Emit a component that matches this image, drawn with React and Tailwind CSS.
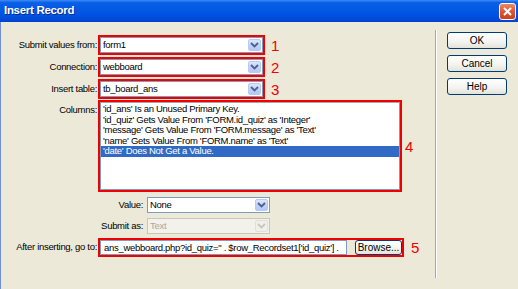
import React from "react";

function Chevron({ color = "#4D6185" }) {
  return (
    <svg width="9" height="6" viewBox="0 0 9 6">
      <path d="M1 1 L4.5 4.5 L8 1" fill="none" stroke={color} strokeWidth="1.8" />
    </svg>
  );
}

const T = "text-[9.5px] tracking-[-0.3px]";

function Select({ value, w, disabled }) {
  return (
    <div
      className={`flex h-[16px] ${w} items-stretch border ${
        disabled ? "bg-[#F2F1EB] border-[#C9C7BA]" : "bg-white border-[#7F9DB9]"
      }`}
    >
      <div
        className={`flex-1 overflow-hidden whitespace-nowrap pl-[2px] ${T} leading-[14px] ${
          disabled ? "text-[#ACA899]" : "text-black"
        }`}
      >
        {value}
      </div>
      <div
        className={`m-[1px] flex w-[13px] items-center justify-center rounded-[2px] border ${
          disabled
            ? "border-[#E2E0D6] bg-[#F0EFEA]"
            : "border-[#B7CAF5] bg-[linear-gradient(to_bottom,#DDE7FE,#C1D3FB_50%,#B4C8F6)]"
        }`}
      >
        <Chevron color={disabled ? "#C9C7BA" : "#4D6185"} />
      </div>
    </div>
  );
}

function Num({ n, cls }) {
  return (
    <span className={`text-[15px] leading-none text-[#F00000] ${cls}`}>{n}</span>
  );
}

function XPButton({ children, cls }) {
  return (
    <div
      className={`flex items-center justify-center rounded-[3px] border border-[#003C74] bg-[linear-gradient(to_bottom,#FFFFFF,#F3F3EF_60%,#E3E2DA)] text-[10px] text-black ${cls}`}
    >
      {children}
    </div>
  );
}

export default function App() {
  return (
    <div className="flex h-[289px] w-[518px] flex-col overflow-hidden bg-[#ECE9D8] font-['Liberation_Sans',Arial,sans-serif] text-black">
      {/* Title bar */}
      <div className="flex h-[22px] shrink-0 items-center justify-between bg-[linear-gradient(to_bottom,#3D8CF5_0%,#0A5FE6_12%,#0055E5_60%,#0049D6_90%,#0040C8_100%)] pl-[4px] pr-[2px]">
        <span className="text-[11.5px] font-bold tracking-[-0.3px] text-white [text-shadow:1px_1px_0_#0A2A8C]">
          Insert Record
        </span>
        <div className="flex h-[17px] w-[17px] items-center justify-center rounded-[3px] border border-white bg-[linear-gradient(to_bottom,#EE8866,#E0552F_50%,#C8401C)]">
          <svg width="9" height="9" viewBox="0 0 9 9">
            <path d="M1 1 L8 8 M8 1 L1 8" stroke="white" strokeWidth="2" />
          </svg>
        </div>
      </div>

      {/* Body */}
      <div className="flex flex-1 border-l border-[#6F8FD8]">
        {/* Form */}
        <div className="flex w-[434px] flex-col">
          {/* Row 1 */}
          <div className="mt-[13px] flex items-center">
            <div className={`w-[96px] text-right ${T}`}>Submit values from:</div>
            <div className="ml-[1px] border-2 border-[#F00000]">
              <Select value="form1" w="w-[163px]" />
            </div>
            <Num n="1" cls="ml-[6px]" />
          </div>
          {/* Row 2 */}
          <div className="mt-[2px] flex items-center">
            <div className={`w-[96px] text-right ${T}`}>Connection:</div>
            <div className="ml-[1px] border-2 border-[#F00000]">
              <Select value="webboard" w="w-[163px]" />
            </div>
            <Num n="2" cls="ml-[6px]" />
          </div>
          {/* Row 3 */}
          <div className="mt-[2px] flex items-center">
            <div className={`w-[96px] text-right ${T}`}>Insert table:</div>
            <div className="ml-[1px] border-2 border-[#F00000]">
              <Select value="tb_board_ans" w="w-[163px]" />
            </div>
            <Num n="3" cls="ml-[6px]" />
          </div>
          {/* Columns */}
          <div className="mt-[1px] flex items-center">
            <div className={`w-[96px] self-start pt-[3px] text-right ${T}`}>Columns:</div>
            <div className="ml-[1px] h-[92px] w-[304px] border-2 border-[#F00000]">
              <div className={`h-full w-full border border-[#7F9DB9] border-t-[#A7A6AA] bg-white pt-[1px] ${T} leading-[10.5px]`}>
                <div className="whitespace-nowrap pl-[2px]">'id_ans' Is an Unused Primary Key.</div>
                <div className="whitespace-nowrap pl-[2px]">'id_quiz' Gets Value From 'FORM.id_quiz' as 'Integer'</div>
                <div className="whitespace-nowrap pl-[2px]">'message' Gets Value From 'FORM.message' as 'Text'</div>
                <div className="whitespace-nowrap pl-[2px]">'name' Gets Value From 'FORM.name' as 'Text'</div>
                <div className="whitespace-nowrap bg-[#316AC5] pl-[2px] text-white">'date' Does Not Get a Value.</div>
              </div>
            </div>
            <Num n="4" cls="ml-[3px]" />
          </div>
          {/* Value */}
          <div className="mt-[5px] flex items-center">
            <div className={`w-[142px] text-right ${T}`}>Value:</div>
            <div className="ml-[4px]">
              <Select value="None" w="w-[123px]" />
            </div>
          </div>
          {/* Submit as */}
          <div className="mt-[5px] flex items-center">
            <div className={`w-[142px] text-right ${T}`}>Submit as:</div>
            <div className="ml-[4px]">
              <Select value="Text" w="w-[123px]" disabled />
            </div>
          </div>
          {/* After inserting */}
          <div className="mt-[4px] flex items-center">
            <div className={`w-[96px] text-right ${T}`}>After inserting, go to:</div>
            <div className="ml-[1px] flex h-[19px] w-[306px] items-center border-2 border-[#F00000]">
              <div className={`h-[15px] w-[247px] overflow-hidden whitespace-nowrap border border-[#7F9DB9] bg-white pl-[3px] ${T} leading-[13px]`}>
                ans_webboard.php?id_quiz=" . $row_Recordset1['id_quiz'] .
              </div>
              <XPButton cls="ml-[8px] h-[15px] w-[47px]">Browse...</XPButton>
            </div>
            <Num n="5" cls="ml-[7px]" />
          </div>
        </div>

        {/* Separator */}
        <div className="mt-[8px] h-[248px] w-[2px] border-l border-r border-l-[#ACA899] border-r-white" />

        {/* Buttons */}
        <div className="ml-[10px] mt-[10px] flex flex-col gap-[6px]">
          <XPButton cls="h-[17px] w-[60px]">OK</XPButton>
          <XPButton cls="h-[17px] w-[60px]">Cancel</XPButton>
          <XPButton cls="h-[17px] w-[60px]">Help</XPButton>
        </div>
      </div>
    </div>
  );
}
